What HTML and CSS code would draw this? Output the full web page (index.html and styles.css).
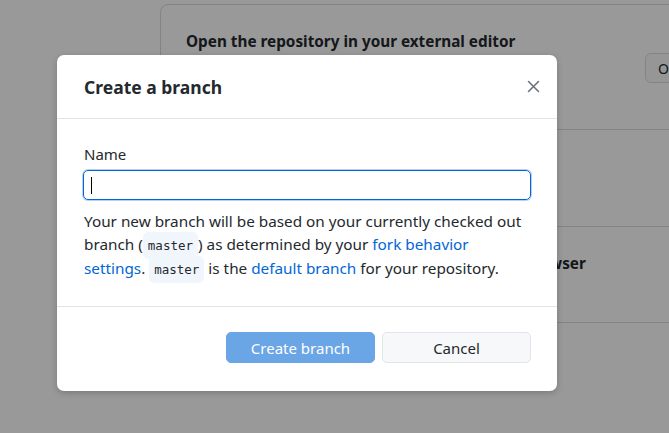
FILE: index.html
```html
<!DOCTYPE html>
<html>
<head>
<meta charset="utf-8">
<link rel="stylesheet" href="styles.css">
</head>
<body>
<div class="page">
  <div class="card">
    <div class="row row-first">
      <div class="row-text">
        <div class="row-title">Open the repository in your external editor</div>
        <div class="row-desc">Select your editor in Options</div>
      </div>
      <button class="row-btn">Open in Visual Studio Code</button>
    </div>
    <div class="row row-mid">
      <div class="row-text">
        <div class="row-title">View the files of your repository in Explorer</div>
        <div class="row-desc">Repository menu or Ctrl Shift F</div>
      </div>
    </div>
    <div class="row row-last">
      <div class="row-text">
        <div class="row-title">Open the repository page on GitHub in your browser</div>
        <div class="row-desc">Repository menu or Ctrl Shift G</div>
      </div>
    </div>
  </div>
</div>

<div class="overlay">
  <div class="dialog">
    <div class="dialog-header">
      <h1 class="dialog-title">Create a branch</h1>
      <button class="close" aria-label="Close">
        <svg width="13" height="13" viewBox="0 0 13 13"><path d="M1.5 1.5 L11.5 11.5 M11.5 1.5 L1.5 11.5" stroke="#6a737d" stroke-width="1.6" stroke-linecap="round"/></svg>
      </button>
    </div>
    <div class="dialog-body">
      <label class="label">Name</label>
      <div class="input"><span class="caret"></span></div>
      <p class="desc">Your new branch will be based on your currently checked out branch (<code class="code">master</code>) as determined by your <a class="link">fork behavior settings</a>. <code class="code">master</code> is the <a class="link">default branch</a> for your repository.</p>
    </div>
    <div class="dialog-footer">
      <button class="btn btn-primary">Create branch</button>
      <button class="btn btn-secondary">Cancel</button>
    </div>
  </div>
</div>
</body>
</html>
```

FILE: styles.css
```css
* { box-sizing: border-box; }
html, body { margin: 0; padding: 0; }
body {
  width: 669px;
  height: 433px;
  overflow: hidden;
  background: #fff;
  font-family: "Noto Sans", "Liberation Sans", sans-serif;
  color: #24292e;
  position: relative;
}
.page {
  padding: 4px 0 0 160px;
}
.card {
  width: 720px;
  border: 1px solid #d8dbdf;
  border-radius: 8px;
  background: #fff;
}
.row {
  display: flex;
  align-items: flex-start;
  padding: 26px 0 0 25px;
  border-bottom: 1px solid #d8dbdf;
}
.row-first { height: 125px; }
.row-mid { height: 97px; }
.row-last { height: 95px; border-bottom: none; }
.row-text { display: flex; flex-direction: column; gap: 6px; }
.row-title { font-weight: 700; font-size: 15.3px; color: #24292e; white-space: nowrap; }
.row-desc { font-size: 13px; color: #6a737d; }
.row-btn {
  flex: none;
  width: 200px;
  height: 30px;
  margin: 22px 34px 0 auto;
  font-family: inherit;
  font-size: 14px;
  text-align: left;
  padding: 0 0 0 12px;
  background: #fafbfc;
  border: 1px solid #d8dbdf;
  border-radius: 6px;
  color: #24292e;
}
.overlay {
  position: absolute;
  inset: 0;
  background: rgba(0, 0, 0, 0.4);
  padding: 55px 0 0 57px;
}
.dialog {
  width: 500px;
  height: 336px;
  background: #fff;
  border-radius: 7px;
  box-shadow: 0 2px 6px rgba(0,0,0,0.2);
  display: flex;
  flex-direction: column;
}
.dialog-header {
  height: 64px;
  display: flex;
  align-items: center;
  justify-content: space-between;
  padding: 0 17px 0 27px;
  border-bottom: 1px solid #e1e4e8;
}
.dialog-title {
  margin: 0;
  font-size: 17.5px;
  font-weight: 700;
  color: #24292e;
}
.close {
  border: none;
  background: none;
  padding: 0;
  width: 13px;
  height: 13px;
  display: flex;
}
.dialog-body {
  padding: 25px 26px 0 26px;
  height: 188px;
  border-bottom: 1px solid #e1e4e8;
}
.label {
  display: block;
  font-size: 15px;
  color: #24292e;
  margin: 0 0 6px 1px;
}
.input {
  height: 30px;
  border: 1px solid #0366d6;
  border-radius: 5px;
  box-shadow: 0 0 0 1px rgba(3,102,214,0.3);
  display: flex;
  align-items: center;
  padding-left: 7px;
}
.caret {
  width: 1px;
  height: 17px;
  background: #000;
}
.desc {
  margin: 10px 0 0 1px;
  font-size: 15.3px;
  line-height: 22.5px;
  color: #24292e;
}
.code {
  font-family: "DejaVu Sans Mono", "Liberation Mono", monospace;
  font-size: 12.5px;
  background: #f1f6fd;
  padding: 6px 5px;
  border-radius: 5px;
}
.link { color: #0366d6; }
.dialog-footer {
  flex: 1;
  display: flex;
  justify-content: flex-end;
  align-items: flex-start;
  gap: 7px;
  padding: 25px 26px 0 0;
}
.btn {
  width: 149px;
  height: 31px;
  border-radius: 5px;
  font-family: inherit;
  font-size: 15px;
}
.btn-primary {
  background: #6aa5e6;
  color: #fff;
  border: 1px solid #6aa5e6;
}
.btn-secondary {
  background: #f7f8fa;
  color: #24292e;
  border: 1px solid #e1e4e8;
}
```
